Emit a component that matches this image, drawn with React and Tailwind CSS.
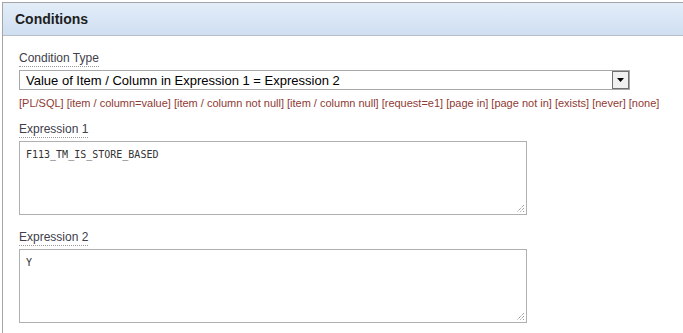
export default function App() {
  const links = [
    "[PL/SQL]",
    "[item / column=value]",
    "[item / column not null]",
    "[item / column null]",
    "[request=e1]",
    "[page in]",
    "[page not in]",
    "[exists]",
    "[never]",
    "[none]",
  ];
  return (
    <div className="w-[683px] h-[333px] bg-white overflow-hidden pt-[2px] pl-[2px]" style={{ fontFamily: '"Liberation Sans", Arial, sans-serif' }}>
      <div className="h-[331px] border-l border-t border-[#a5a5a5]">
        <div className="h-[33px] border-b border-[#b5bfca] bg-gradient-to-b from-[#e3edf9] to-[#cfdff1] flex items-center pl-[12px]">
          <span className="text-[14px] font-bold text-[#1e1e1e]">Conditions</span>
        </div>
        <div className="pl-[16px] pt-[15px]">
          <div className="h-[17px] flex items-start">
            <span className="text-[12px] leading-[15px] text-[#40404a] border-b border-dotted border-[#999]">Condition Type</span>
          </div>
          <div className="mt-[2px] w-[611px] h-[20px] border border-[#a8a8a8] flex items-center bg-white">
            <span className="flex-1 pl-[6px] text-[13px] text-black leading-none">Value of Item / Column in Expression 1 = Expression 2</span>
            <div className="w-[17px] h-[18px] border border-[#707070] bg-[#f0f0f0] flex items-center justify-center">
              <svg width="7" height="4" viewBox="0 0 7 4"><path d="M0 0h7L3.5 4z" fill="#000" /></svg>
            </div>
          </div>
          <div className="mt-[7px] flex gap-[3px] text-[11px] leading-[13px] text-[#8e3a34]">
            {links.map((l) => (
              <span key={l}>{l}</span>
            ))}
          </div>
          <div className="mt-[12px] h-[17px] flex items-start">
            <span className="text-[12px] leading-[15px] text-[#40404a] border-b border-dotted border-[#999]">Expression 1</span>
          </div>
          <div className="mt-[2px] relative w-[508px] h-[74px] border border-[#b0b0b0] bg-white">
            <div className="pl-[6px] pt-[7px] text-[10px] leading-[12px] text-[#333]" style={{ fontFamily: '"DejaVu Sans Mono", monospace' }}>F113_TM_IS_STORE_BASED</div>
            <svg className="absolute right-[1px] bottom-[1px]" width="9" height="9" viewBox="0 0 9 9">
              <path d="M8 1L1 8M8 4L4 8M8 7L7 8" stroke="#777" strokeWidth="1" strokeDasharray="1 1" />
            </svg>
          </div>
          <div className="mt-[15px] h-[17px] flex items-start">
            <span className="text-[12px] leading-[15px] text-[#40404a] border-b border-dotted border-[#999]">Expression 2</span>
          </div>
          <div className="mt-[2px] relative w-[508px] h-[74px] border border-[#b0b0b0] bg-white">
            <div className="pl-[6px] pt-[7px] text-[10px] leading-[12px] text-[#333]" style={{ fontFamily: '"DejaVu Sans Mono", monospace' }}>Y</div>
            <svg className="absolute right-[1px] bottom-[1px]" width="9" height="9" viewBox="0 0 9 9">
              <path d="M8 1L1 8M8 4L4 8M8 7L7 8" stroke="#777" strokeWidth="1" strokeDasharray="1 1" />
            </svg>
          </div>
        </div>
      </div>
    </div>
  );
}
